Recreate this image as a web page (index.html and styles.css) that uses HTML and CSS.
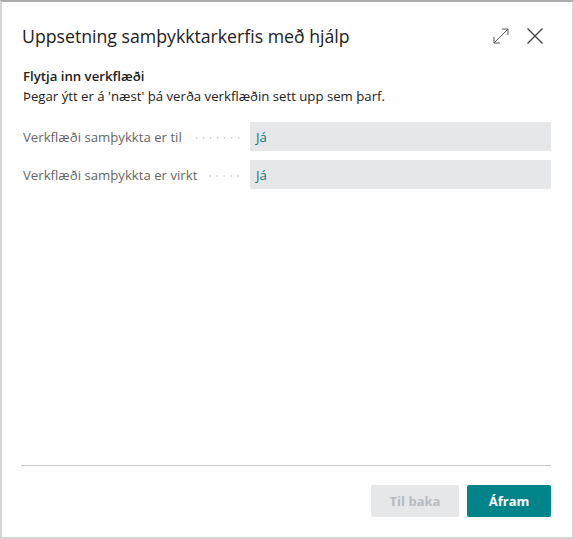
FILE: index.html
```html
<!DOCTYPE html>
<html lang="is">
<head>
<meta charset="utf-8">
<link rel="stylesheet" href="styles.css">
</head>
<body>
<div class="dialog">
  <div class="header">
    <h1 class="title">Uppsetning samþykktarkerfis með hjálp</h1>
    <div class="actions">
      <svg class="icon expand" width="18" height="18" viewBox="0 0 18 18"><path d="M2 16 L16 2 M10 2 H16 V8 M2 10 V16 H8" fill="none" stroke="#555" stroke-width="1"/></svg>
      <svg class="icon close" width="18" height="18" viewBox="0 0 18 18"><path d="M1.5 1.5 L16.5 16.5 M16.5 1.5 L1.5 16.5" fill="none" stroke="#444" stroke-width="1.4"/></svg>
    </div>
  </div>
  <div class="content">
    <div class="section-title">Flytja inn verkflæði</div>
    <div class="section-desc">Þegar ýtt er á 'næst' þá verða verkflæðin sett upp sem þarf.</div>
    <div class="fields">
      <div class="row">
        <div class="label"><span class="label-text">Verkflæði samþykkta er til</span><span class="dots"></span></div>
        <div class="value">Já</div>
      </div>
      <div class="row">
        <div class="label"><span class="label-text">Verkflæði samþykkta er virkt</span><span class="dots"></span></div>
        <div class="value">Já</div>
      </div>
    </div>
  </div>
  <div class="footer">
    <button class="btn btn-disabled">Til baka</button>
    <button class="btn btn-primary">Áfram</button>
  </div>
</div>
</body>
</html>
```

FILE: styles.css
```css
html, body {
  margin: 0;
  padding: 0;
  background: #fff;
}
body {
  font-family: "Segoe UI", "Open Sans", "Noto Sans", sans-serif;
  color: #212121;
}
.dialog {
  box-sizing: border-box;
  width: 574px;
  height: 539px;
  border-top: 2px solid #acacac;
  border-left: 2px solid #d4d4d4;
  border-right: 2px solid #d4d4d4;
  border-bottom: 2px solid #d4d4d4;
  display: flex;
  flex-direction: column;
  background: #fff;
}
.header {
  display: flex;
  align-items: center;
  justify-content: space-between;
  padding: 19px 28px 0 20px;
  height: 30px;
}
.title {
  margin: 0;
  font-size: 17.7px;
  font-weight: 400;
  color: #212121;
}
.actions {
  display: flex;
  align-items: center;
  gap: 16px;
}
.icon { display: block; }
.content {
  flex: 1;
  padding: 15px 21px 0 21px;
}
.section-title {
  font-size: 13.2px;
  font-weight: 600;
  line-height: 20px;
  color: #212121;
}
.section-desc {
  font-size: 13.2px;
  line-height: 20px;
  color: #212121;
}
.fields {
  margin-top: 16px;
  display: flex;
  flex-direction: column;
  gap: 9px;
}
.row {
  display: flex;
  align-items: stretch;
  height: 29px;
}
.label {
  width: 227px;
  display: flex;
  align-items: center;
  font-size: 13.2px;
  color: #666;
}
.label-text { white-space: nowrap; }
.dots {
  flex: 1;
  margin: 2px 8px 0 10px;
  height: 2px;
  background-image: radial-gradient(circle, #c8c8c8 0.7px, transparent 1.1px);
  background-size: 7px 2px;
  background-repeat: repeat-x;
  background-position: right center;
}
.value {
  flex: 1;
  background: #e6e7e9;
  display: flex;
  align-items: center;
  padding-left: 6px;
  font-size: 13.2px;
  color: #0b7a7d;
}
.footer {
  margin: 0 21px 20px 19px;
  border-top: 1px solid #c8c8c8;
  padding-top: 19px;
  display: flex;
  justify-content: flex-end;
  gap: 8px;
}
.btn {
  height: 32px;
  border: none;
  border-radius: 2px;
  font-family: inherit;
  font-size: 13px;
  font-weight: 700;
  padding: 0;
}
.btn-disabled {
  width: 88px;
  background: #e6e7e9;
  color: #b9bbbf;
}
.btn-primary {
  width: 84px;
  background: #008489;
  color: #fff;
}
```
